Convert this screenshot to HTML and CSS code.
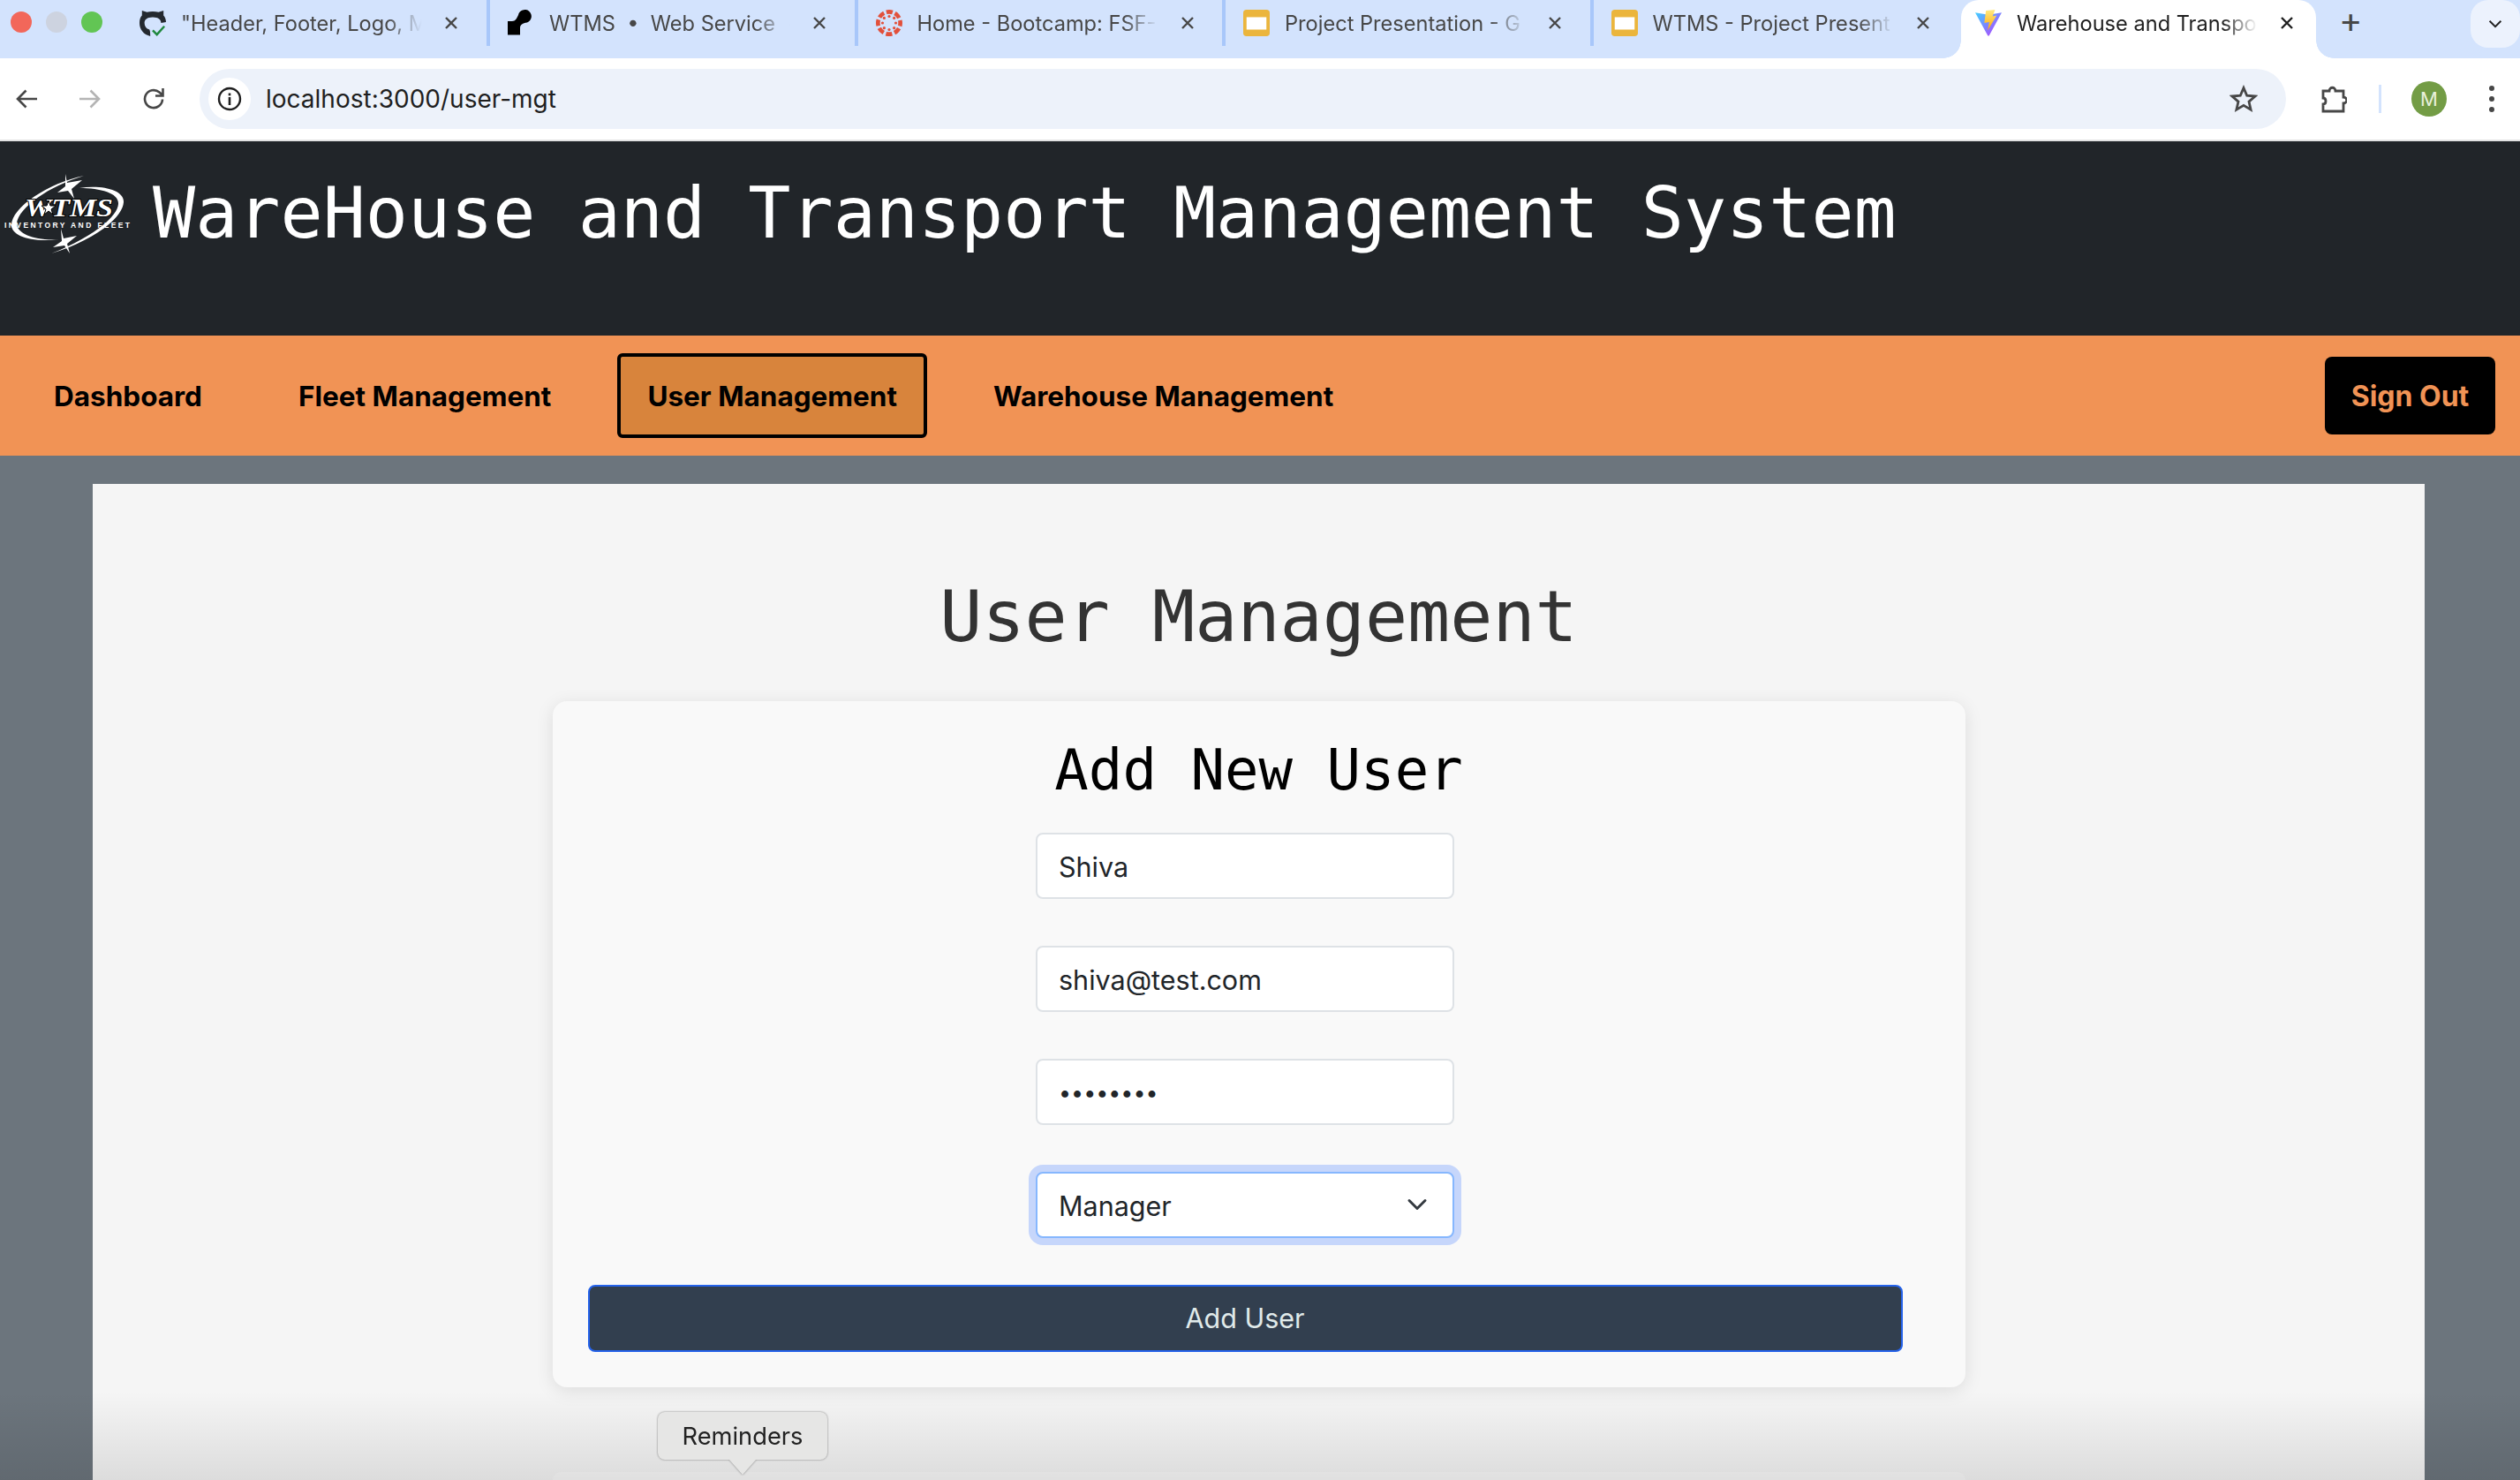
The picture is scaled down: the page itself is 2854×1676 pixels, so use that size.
FILE: index.html
```html
<!DOCTYPE html>
<html lang="en">
<head>
  <meta charset="UTF-8">
  <meta name="viewport" content="width=device-width, initial-scale=1.0">
  <title>Warehouse and Transport Management System</title>
  <link rel="stylesheet" href="styles.css">
</head>
<body>
  <!-- Browser chrome -->
  <div class="tabstrip">
    <div class="traffic">
      <span class="light light-red"></span>
      <span class="light light-grey"></span>
      <span class="light light-green"></span>
    </div>
    <div class="tab first">
      <svg class="favicon" viewBox="0 0 32 32">
        <path fill="#24292f" d="M13 32C5 30 0 24 0 16 0 12 1 9 3 7V1l6 2c4-1 10-1 14 0l6-2v6c2 2 3 5 3 8l-6 1c0-4-3-7-10-7S6 12 6 16c0 4 2 7 6 8 1 2 1 5 1 8z"/>
        <path fill="none" stroke="#1f883d" stroke-width="2.600" d="M16 25l5 5 9-10"/>
      </svg>
      <span class="tab-title">"Header, Footer, Logo, M</span>
      <svg class="tab-close" viewBox="0 0 14 14"><path d="M1 1l12 12M13 1L1 13"/></svg>
    </div>
    <div class="tab">
      <svg class="favicon" viewBox="0 0 30 32">
        <path d="M0 14H5C9 14 10 11 12 7A7.500 7.500 0 1 1 22 15.500C17 16 14 18 14 22V29.500H0Z"/>
      </svg>
      <span class="tab-title">WTMS &nbsp;•&nbsp; Web Service &nbsp;•</span>
      <svg class="tab-close" viewBox="0 0 14 14"><path d="M1 1l12 12M13 1L1 13"/></svg>
    </div>
    <div class="tab">
      <svg class="favicon" viewBox="0 0 32 32">
        <circle cx="16" cy="16" r="13.500" fill="none" stroke="#e2503b" stroke-width="5" stroke-dasharray="7.600 3" stroke-dashoffset="3.800"/>
        <g fill="#e2503b">
          <circle cx="16" cy="8" r="1.700"/><circle cx="16" cy="24" r="1.700"/>
          <circle cx="8" cy="16" r="1.700"/><circle cx="24" cy="16" r="1.700"/>
          <circle cx="10" cy="10" r="1.700"/><circle cx="22" cy="10" r="1.700"/>
          <circle cx="10" cy="22" r="1.700"/><circle cx="22" cy="22" r="1.700"/>
        </g>
      </svg>
      <span class="tab-title">Home - Bootcamp: FSF-</span>
      <svg class="tab-close" viewBox="0 0 14 14"><path d="M1 1l12 12M13 1L1 13"/></svg>
    </div>
    <div class="tab">
      <svg class="favicon" viewBox="0 0 32 32">
        <rect width="32" height="32" rx="4" fill="#ebb53c"/>
        <rect x="4" y="9" width="24" height="15" fill="#fff"/>
      </svg>
      <span class="tab-title">Project Presentation - G</span>
      <svg class="tab-close" viewBox="0 0 14 14"><path d="M1 1l12 12M13 1L1 13"/></svg>
    </div>
    <div class="tab">
      <svg class="favicon" viewBox="0 0 32 32">
        <rect width="32" height="32" rx="4" fill="#ebb53c"/>
        <rect x="4" y="9" width="24" height="15" fill="#fff"/>
      </svg>
      <span class="tab-title">WTMS - Project Present</span>
      <svg class="tab-close" viewBox="0 0 14 14"><path d="M1 1l12 12M13 1L1 13"/></svg>
    </div>
    <div class="tab active">
      <svg class="favicon" viewBox="0 0 32 32">
        <defs>
          <linearGradient id="vite-a" x1="0" y1="0" x2="1" y2="1">
            <stop offset="0" stop-color="#41d1ff"/>
            <stop offset="1" stop-color="#bd34fe"/>
          </linearGradient>
          <linearGradient id="vite-b" x1="0" y1="0" x2="0" y2="1">
            <stop offset="0" stop-color="#ffea83"/>
            <stop offset="1" stop-color="#ffa800"/>
          </linearGradient>
        </defs>
        <path fill="url(#vite-a)" d="M0 3.500L16 6l16-2.500L17 31c-.5 1-1.500 1-2 0z"/>
        <path fill="url(#vite-b)" d="M13 1L24 0 21 8l5-1L15 25l2-10-6 1z"/>
      </svg>
      <span class="tab-title">Warehouse and Transpo</span>
      <svg class="tab-close" viewBox="0 0 14 14"><path d="M1 1l12 12M13 1L1 13"/></svg>
    </div>
    <span class="new-tab">+</span>
    <div class="tab-search">
      <svg viewBox="0 0 20 12" class="tab-search-icon"><path fill="none" stroke="#1f1f1f" stroke-width="2.400" d="M2 2l8 8 8-8"/></svg>
    </div>
  </div>

  <div class="toolbar">
    <div class="nav-btns">
      <svg viewBox="0 0 24 24"><path fill="none" stroke="#474747" stroke-width="2.600" d="M24 12H2M11.500 2.500L2 12l9.500 9.500"/></svg>
      <svg viewBox="0 0 24 24"><path fill="none" stroke="#b4b4b4" stroke-width="2.600" d="M0 12h22M12.500 2.500L22 12l-9.500 9.500"/></svg>
      <svg viewBox="0 0 24 24"><path fill="none" stroke="#474747" stroke-width="2.600" d="M22 12.500A10 10 0 1 1 18.500 4.500L22 7.500M22.500 0v8.500H14"/></svg>
    </div>
    <div class="omnibox">
      <span class="site-info">
        <svg viewBox="0 0 28 28">
          <circle cx="14" cy="14" r="12" fill="none" stroke="#1f1f1f" stroke-width="2.400"/>
          <rect x="12.700" y="12" width="2.600" height="9" fill="#1f1f1f"/>
          <rect x="12.700" y="7.500" width="2.600" height="2.800" fill="#1f1f1f"/>
        </svg>
      </span>
      <span class="url">localhost:3000/user-mgt</span>
      <svg class="star" viewBox="0 0 32 32"><path fill="none" stroke="#474747" stroke-width="2.800" d="M16 3.500l3.700 8.700 9.300.8-7 6.100 2.100 9.100-8.100-4.800-8.100 4.800 2.100-9.100-7-6.100 9.300-.8z"/></svg>
    </div>
    <div class="toolbar-right">
      <svg class="ext" viewBox="0 0 30 32"><path fill="none" stroke="#474747" stroke-width="2.800" d="M3 7h7c0-5 7-5 7 0h9v7c5 0 5 7 0 7v9H3v-8c4 0 4-7 0-7z"/></svg>
      <span class="toolbar-sep"></span>
      <span class="avatar">M</span>
      <span class="menu-dots"><i></i><i></i><i></i></span>
    </div>
  </div>

  <!-- App -->
  <header class="site-header">
    <svg class="logo" viewBox="0 0 148 100">
      <g fill="#fff">
        <path d="M90 4C50 12 8 40 8 60 8 72 30 80 62 76 35 78 14 70 14 58 16 40 50 16 90 4Z"/>
        <path d="M85 18C110 14 136 20 135 34 134 52 100 78 53 92 95 76 128 52 129 36 130 24 110 18 85 18Z"/>
        <path d="M69 2L71 12 88 9 76 19 79 30 72 21 60 23 69 16Z"/>
        <path d="M64 64L67 75 82 72 71 81 74 92 68 83 55 85 65 78Z"/>
      </g>
      <text x="73" y="50" class="logo-word" text-anchor="middle" textLength="100" lengthAdjust="spacingAndGlyphs">WTMS</text>
      <path class="logo-star" d="M50 32l2 6 6 0-5 4 2 6-5-4-5 4 2-6-5-4 6 0z"/>
      <text x="71" y="63" class="logo-sub" text-anchor="middle" textLength="142">INVENTORY AND FLEET</text>
    </svg>
    <h1 class="site-title">WareHouse and Transport Management System</h1>
  </header>

  <nav class="main-nav">
    <a class="nav-link">Dashboard</a>
    <a class="nav-link">Fleet Management</a>
    <a class="nav-link current">User Management</a>
    <a class="nav-link">Warehouse Management</a>
    <button class="sign-out">Sign Out</button>
  </nav>

  <main class="page">
    <section class="panel">
      <h2 class="panel-title">User Management</h2>
      <div class="card">
        <h3 class="card-title">Add New User</h3>
        <form class="user-form">
          <input class="field" type="text" value="Shiva">
          <input class="field" type="email" value="shiva@test.com">
          <input class="field field-pass" type="password" value="shiva123">
          <select class="field field-select">
            <option>Manager</option>
          </select>
          <button class="add-user" type="button">Add User</button>
        </form>
      </div>
      <div class="card-next"></div>
    </section>
  </main>

  <div class="bottom-fade"></div>
  <div class="tooltip">Reminders</div>
</body>
</html>
```

FILE: styles.css
```css
* {
  box-sizing: border-box;
}

html, body {
  margin: 0;
  height: 100%;
  overflow: hidden;
}

body {
  position: relative;
  display: flex;
  flex-direction: column;
  font-family: Inter, "Noto Sans", sans-serif;
  background: #6c757d;
}

/* Tab strip */
.tabstrip {
  display: flex;
  align-items: flex-start;
  flex: none;
  height: 66px;
  background: #d3e3fd;
}

.traffic {
  display: flex;
  gap: 16px;
  padding: 13px 0 0 12px;
  width: 134px;
  flex: none;
}

.light {
  width: 24px;
  height: 24px;
  border-radius: 50%;
}

.light-red { background: #f2675a; }
.light-grey { background: #cdd3e0; }
.light-green { background: #62c554; }

.tab {
  position: relative;
  display: flex;
  align-items: center;
  flex: none;
  width: 416.500px;
  height: 52px;
  padding-left: 20px;
  color: #474747;
  font-size: 23.600px;
  border-left: 4px solid #a8c7fa;
}

.tab.first {
  border-left-color: transparent;
  width: 417px;
}

.favicon {
  width: 30px;
  height: 32px;
  flex: none;
  margin-right: 17px;
}

.tab-title {
  width: 284px;
  overflow: hidden;
  white-space: nowrap;
  -webkit-mask-image: linear-gradient(to right, #000 82%, transparent 96%);
  mask-image: linear-gradient(to right, #000 82%, transparent 96%);
}

.tab-close {
  flex: none;
  width: 14px;
  height: 14px;
  margin-left: 15px;
  fill: none;
  stroke: #474747;
  stroke-width: 2.400;
}

.tab.active {
  width: 402px;
  height: 66px;
  margin-left: 4px;
  padding: 0 0 14px 16px;
  color: #1f1f1f;
  border-left: 0;
  background: #fff;
  border-radius: 20px 20px 0 0;
}

.tab.active .tab-close {
  stroke: #1f1f1f;
}

.tab.active::before,
.tab.active::after {
  content: "";
  position: absolute;
  bottom: 0;
  width: 20px;
  height: 20px;
}

.tab.active::before {
  left: -20px;
  background: radial-gradient(circle at 0 0, #d3e3fd 19.500px, #fff 20px);
}

.tab.active::after {
  right: -20px;
  background: radial-gradient(circle at 100% 0, #d3e3fd 19.500px, #fff 20px);
}

.new-tab {
  margin: 0 0 0 26px;
  font-size: 40px;
  line-height: 46px;
  color: #474747;
}

.tab-search {
  display: flex;
  align-items: center;
  justify-content: center;
  margin-left: auto;
  width: 56px;
  height: 54px;
  background: #ecf2fd;
  border-radius: 20px;
}

.tab-search-icon {
  width: 16px;
  height: 10px;
}

/* Toolbar */
.toolbar {
  display: flex;
  align-items: center;
  flex: none;
  height: 94px;
  background: #fff;
  border-bottom: 2px solid #e3e3e3;
}

.nav-btns {
  display: flex;
  gap: 48px;
  padding-left: 18px;
  width: 226px;
  flex: none;
}

.nav-btns svg {
  width: 24px;
  height: 24px;
}

.omnibox {
  display: flex;
  align-items: center;
  flex: none;
  width: 2363px;
  height: 68px;
  padding: 0 32px 0 10px;
  background: #edf2fa;
  border-radius: 34px;
}

.site-info {
  display: flex;
  align-items: center;
  justify-content: center;
  width: 48px;
  height: 48px;
  background: #fff;
  border-radius: 50%;
}

.site-info svg {
  width: 28px;
  height: 28px;
}

.url {
  margin-left: 17px;
  font-size: 28px;
  color: #1f1f1f;
}

.star {
  margin-left: auto;
  width: 32px;
  height: 32px;
}

.toolbar-right {
  display: flex;
  align-items: center;
  flex: 1;
  padding-left: 39px;
}

.ext {
  width: 30px;
  height: 32px;
}

.toolbar-sep {
  width: 3px;
  height: 32px;
  margin: 0 34px 0 36px;
  background: #d3e3fd;
}

.avatar {
  display: flex;
  align-items: center;
  justify-content: center;
  width: 40px;
  height: 40px;
  border-radius: 50%;
  background: #739c45;
  color: #e8f0dc;
  font-size: 22px;
}

.menu-dots {
  display: flex;
  flex-direction: column;
  gap: 6px;
  margin-left: 48px;
}

.menu-dots i {
  width: 6px;
  height: 6px;
  border-radius: 50%;
  background: #474747;
}

/* Header */
.site-header {
  display: flex;
  align-items: flex-start;
  flex: none;
  height: 220px;
  padding: 35px 0 0 5px;
  background: #212529;
}

.logo {
  width: 148px;
  height: 100px;
  flex: none;
}

.logo-word {
  font-family: "Liberation Serif", serif;
  font-weight: 700;
  font-style: italic;
  font-size: 30px;
  fill: #fff;
  stroke: #000;
  stroke-width: 2px;
  paint-order: stroke;
}

.logo-star {
  fill: #fff;
  stroke: #000;
  stroke-width: 1px;
}

.logo-sub {
  font-family: "Liberation Sans", sans-serif;
  font-weight: 700;
  font-size: 8.500px;
  fill: #fff;
}

.site-title {
  margin: -1px 0 0 20px;
  font-family: "DejaVu Sans Mono", monospace;
  font-weight: 400;
  font-size: 80px;
  line-height: 1.2;
  color: #fff;
  white-space: nowrap;
}

/* Nav */
.main-nav {
  display: flex;
  align-items: center;
  flex: none;
  gap: 41px;
  height: 136px;
  padding: 0 28px 0 27px;
  background: #f19355;
}

.nav-link {
  display: flex;
  align-items: center;
  height: 96px;
  padding: 0 30px;
  border: 4px solid transparent;
  border-radius: 6px;
  font-size: 31.500px;
  font-weight: 700;
  color: #000;
}

.nav-link.current {
  background: #d8843c;
  border-color: #000;
}

.sign-out {
  margin-left: auto;
  width: 193px;
  height: 88px;
  border: 0;
  border-radius: 8px;
  background: #000;
  color: #f19355;
  font: 700 32px Inter, sans-serif;
}

/* Page */
.page {
  flex: 1;
  min-height: 0;
  padding: 32px 108px 0 105px;
}

.panel {
  height: 100%;
  padding-top: 103px;
  overflow: hidden;
  background: #f5f5f5;
}

.panel-title {
  margin: 0;
  font-family: "DejaVu Sans Mono", monospace;
  font-weight: 400;
  font-size: 80px;
  line-height: 1.2;
  color: #333;
  text-align: center;
}

.card {
  width: 1600px;
  height: 777px;
  margin: 47px auto 0;
  padding: 40px 0 0 40px;
  background: #f9f9f9;
  border-radius: 16px;
  box-shadow: 0 4px 20px rgba(0, 0, 0, 0.1);
}

.card-title {
  margin: 0;
  padding-right: 40px;
  font-family: "DejaVu Sans Mono", monospace;
  font-weight: 400;
  font-size: 64px;
  line-height: 1.2;
  color: #000;
  text-align: center;
}

.user-form {
  display: flex;
  flex-direction: column;
  align-items: center;
  gap: 53px;
  width: 1489px;
  margin-top: 32px;
}

.field {
  width: 474px;
  height: 75px;
  padding: 2px 24px 0;
  background: #fff;
  border: 2px solid #dee2e6;
  border-radius: 8px;
  font: 400 30.500px Inter, sans-serif;
  color: #212529;
  outline: none;
  appearance: none;
}

.field-pass {
  font-size: 25px;
}

.field-select {
  border-color: #86b7fe;
  box-shadow: 0 0 0 8px #c6d6fb;
  background: #fff url("data:image/svg+xml,%3csvg xmlns='http://www.w3.org/2000/svg' viewBox='0 0 16 16'%3e%3cpath fill='none' stroke='%23343a40' stroke-linecap='round' stroke-linejoin='round' stroke-width='2' d='m2 5 6 6 6-6'/%3e%3c/svg%3e") no-repeat right 24px center / 32px 24px;
}

.add-user {
  width: 100%;
  height: 76px;
  border: 2px solid #2563eb;
  border-radius: 8px;
  background: #323f4f;
  color: #e0eaea;
  font: 400 30.500px Inter, sans-serif;
}

.card-next {
  width: 1600px;
  height: 9px;
  margin: 96px auto 0;
  background: #f9f9f9;
  border-radius: 16px 16px 0 0;
}

.bottom-fade {
  position: absolute;
  left: 0;
  right: 0;
  bottom: 0;
  height: 100px;
  background: linear-gradient(to bottom, rgba(0, 0, 0, 0), rgba(0, 0, 0, 0.1));
}

.tooltip {
  position: absolute;
  left: 745px;
  top: 1599px;
  width: 192px;
  height: 54px;
  display: flex;
  align-items: center;
  justify-content: center;
  background: #e6e6e5;
  border-radius: 8px;
  filter: drop-shadow(0 0 1px rgba(0, 0, 0, 0.45));
  color: #222;
  font-size: 27.300px;
}

.tooltip::after {
  content: "";
  position: absolute;
  left: 80px;
  top: 53px;
  width: 0;
  height: 0;
  border-left: 16px solid transparent;
  border-right: 16px solid transparent;
  border-top: 18px solid #e6e6e5;
}
```
